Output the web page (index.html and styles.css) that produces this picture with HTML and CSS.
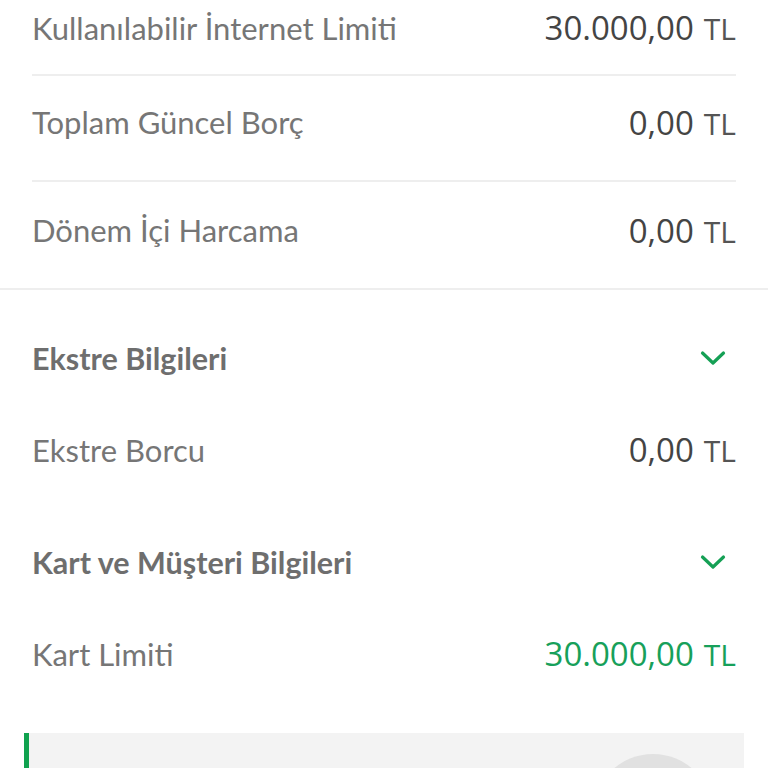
FILE: index.html
```html
<!DOCTYPE html>
<html lang="tr">
<head>
<meta charset="utf-8">
<title>Kart Bilgileri</title>
<link rel="stylesheet" href="styles.css">
</head>
<body>
<div class="summary">
  <div class="row row-first">
    <span class="label">Kullanılabilir İnternet Limiti</span>
    <span class="value"><span class="num">30.000,00</span><span class="cur">TL</span></span>
  </div>
  <div class="row">
    <span class="label">Toplam Güncel Borç</span>
    <span class="value"><span class="num">0,00</span><span class="cur">TL</span></span>
  </div>
  <div class="row row-last">
    <span class="label">Dönem İçi Harcama</span>
    <span class="value"><span class="num">0,00</span><span class="cur">TL</span></span>
  </div>
</div>
<div class="details">
  <div class="group">
    <div class="head">
      <span class="title">Ekstre Bilgileri</span>
      <svg class="chev" width="26" height="16" viewBox="0 0 26 16"><path d="M2.5 3 L13 13 L23.5 3" fill="none" stroke="#15a055" stroke-width="3.2" stroke-linecap="round" stroke-linejoin="round"/></svg>
    </div>
    <div class="item">
      <span class="label">Ekstre Borcu</span>
      <span class="value"><span class="num">0,00</span><span class="cur">TL</span></span>
    </div>
  </div>
  <div class="group">
    <div class="head">
      <span class="title">Kart ve Müşteri Bilgileri</span>
      <svg class="chev" width="26" height="16" viewBox="0 0 26 16"><path d="M2.5 3 L13 13 L23.5 3" fill="none" stroke="#15a055" stroke-width="3.2" stroke-linecap="round" stroke-linejoin="round"/></svg>
    </div>
    <div class="item">
      <span class="label">Kart Limiti</span>
      <span class="value green"><span class="num">30.000,00</span><span class="cur">TL</span></span>
    </div>
  </div>
  <div class="card">
    <div class="circle"></div>
  </div>
</div>
</body>
</html>
```
FILE: styles.css
```css
html, body {
  margin: 0;
  padding: 0;
  background: #ffffff;
  overflow: hidden;
}
body {
  width: 768px;
  height: 768px;
  font-family: Lato, "Noto Sans", sans-serif;
}
.summary {
  padding: 0 32px;
  border-bottom: 2px solid #eeeeee;
}
.row {
  height: 106px;
  box-sizing: border-box;
  padding-bottom: 12px;
  display: flex;
  align-items: center;
  justify-content: space-between;
  border-bottom: 2px solid #eeeeee;
}
.row-first {
  height: 76px;
  padding-bottom: 19px;
}
.row-last {
  border-bottom: none;
  height: 106px;
  padding-bottom: 10px;
}
.label {
  font-family: Lato, sans-serif;
  font-size: 31px;
  color: #767676;
  font-weight: 400;
}
.value {
  font-family: "Open Sans", sans-serif;
  white-space: nowrap;
  display: flex;
  align-items: baseline;
}
.value .num {
  font-size: 33px;
  font-weight: 500;
  color: #444444;
}
.value .cur {
  font-size: 30px;
  font-weight: 400;
  color: #555555;
  margin-left: 10px;
}
.value.green .num,
.value.green .cur {
  color: #17a05a;
}
.details {
  padding-top: 26px;
}
.group {
  padding: 0 32px;
  margin-bottom: 20px;
}
.head, .item {
  height: 92px;
  box-sizing: border-box;
  padding-bottom: 9px;
  display: flex;
  align-items: center;
  justify-content: space-between;
}
.title {
  font-size: 30.5px;
  font-weight: 700;
  color: #6e6e6e;
}
.chev {
  margin-right: 10px;
  margin-top: 1px;
}
.card {
  margin: 29px 24px 0;
  height: 120px;
  background: #f3f3f3;
  border-left: 5px solid #10a24f;
  display: flex;
  justify-content: flex-end;
  padding: 21px 31px 0 0;
  box-sizing: border-box;
}
.circle {
  width: 120px;
  height: 120px;
  border-radius: 50%;
  background: #e1e1e1;
  flex: none;
}
```
